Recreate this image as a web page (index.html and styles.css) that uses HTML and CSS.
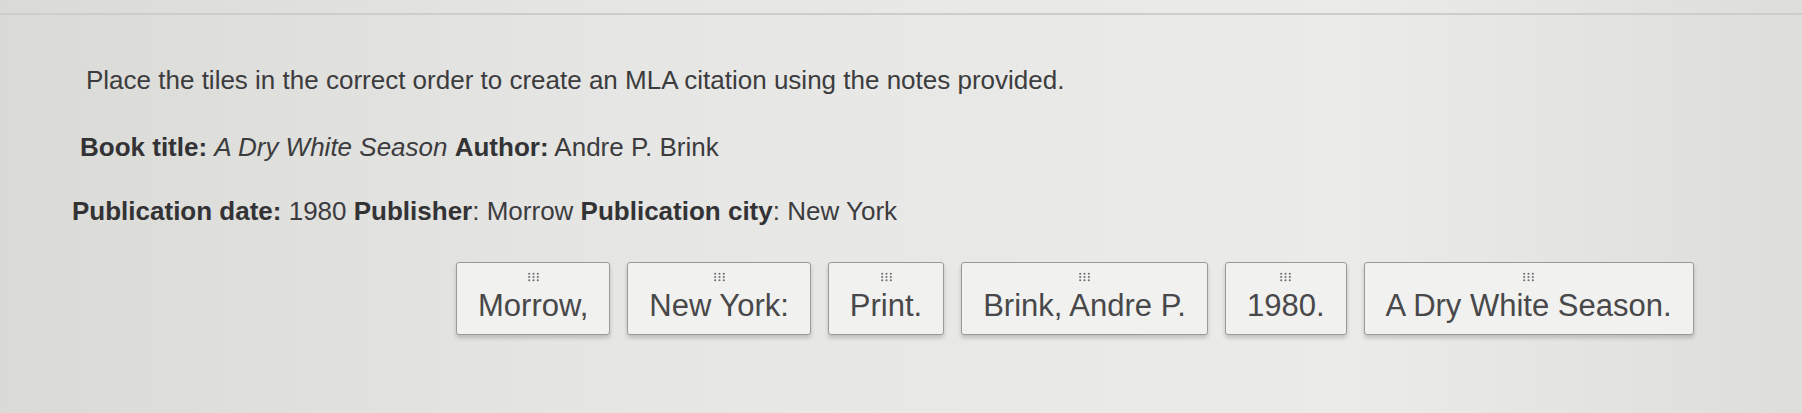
FILE: index.html
```html
<!DOCTYPE html>
<html lang="en">
<head>
  <meta charset="UTF-8" />
  <meta name="viewport" content="width=device-width, initial-scale=1.0"/>
  <title>MLA Citation</title>
  <link rel="stylesheet" href="styles.css">
</head>
<body>

  <div class="page">
    <p class="prompt">Place the tiles in the correct order to create an MLA citation using the notes provided.</p>
    <p class="note first"><b>Book title:</b> <i>A Dry White Season</i> <b>Author:</b> Andre P. Brink</p>
    <p class="note"><b>Publication date:</b> 1980 <b>Publisher</b>: Morrow <b>Publication city</b>: New York</p>

    <div class="tiles" id="tiles">
      <div class="tile" draggable="true">
        <svg class="grip" viewBox="0 0 12 9"><g><circle cx="2" cy="1.5" r="1"/><circle cx="6" cy="1.5" r="1"/><circle cx="10" cy="1.5" r="1"/><circle cx="2" cy="4.5" r="1"/><circle cx="6" cy="4.5" r="1"/><circle cx="10" cy="4.5" r="1"/><circle cx="2" cy="7.5" r="1"/><circle cx="6" cy="7.5" r="1"/><circle cx="10" cy="7.5" r="1"/></g></svg>
        Morrow,
      </div>
      <div class="tile" draggable="true">
        <svg class="grip" viewBox="0 0 12 9"><g><circle cx="2" cy="1.5" r="1"/><circle cx="6" cy="1.5" r="1"/><circle cx="10" cy="1.5" r="1"/><circle cx="2" cy="4.5" r="1"/><circle cx="6" cy="4.5" r="1"/><circle cx="10" cy="4.5" r="1"/><circle cx="2" cy="7.5" r="1"/><circle cx="6" cy="7.5" r="1"/><circle cx="10" cy="7.5" r="1"/></g></svg>
        New York:
      </div>
      <div class="tile" draggable="true">
        <svg class="grip" viewBox="0 0 12 9"><g><circle cx="2" cy="1.5" r="1"/><circle cx="6" cy="1.5" r="1"/><circle cx="10" cy="1.5" r="1"/><circle cx="2" cy="4.5" r="1"/><circle cx="6" cy="4.5" r="1"/><circle cx="10" cy="4.5" r="1"/><circle cx="2" cy="7.5" r="1"/><circle cx="6" cy="7.5" r="1"/><circle cx="10" cy="7.5" r="1"/></g></svg>
        Print.
      </div>
      <div class="tile" draggable="true">
        <svg class="grip" viewBox="0 0 12 9"><g><circle cx="2" cy="1.5" r="1"/><circle cx="6" cy="1.5" r="1"/><circle cx="10" cy="1.5" r="1"/><circle cx="2" cy="4.5" r="1"/><circle cx="6" cy="4.5" r="1"/><circle cx="10" cy="4.5" r="1"/><circle cx="2" cy="7.5" r="1"/><circle cx="6" cy="7.5" r="1"/><circle cx="10" cy="7.5" r="1"/></g></svg>
        Brink, Andre P.
      </div>
      <div class="tile" draggable="true">
        <svg class="grip" viewBox="0 0 12 9"><g><circle cx="2" cy="1.5" r="1"/><circle cx="6" cy="1.5" r="1"/><circle cx="10" cy="1.5" r="1"/><circle cx="2" cy="4.5" r="1"/><circle cx="6" cy="4.5" r="1"/><circle cx="10" cy="4.5" r="1"/><circle cx="2" cy="7.5" r="1"/><circle cx="6" cy="7.5" r="1"/><circle cx="10" cy="7.5" r="1"/></g></svg>
        1980.
      </div>
      <div class="tile" draggable="true">
        <svg class="grip" viewBox="0 0 12 9"><g><circle cx="2" cy="1.5" r="1"/><circle cx="6" cy="1.5" r="1"/><circle cx="10" cy="1.5" r="1"/><circle cx="2" cy="4.5" r="1"/><circle cx="6" cy="4.5" r="1"/><circle cx="10" cy="4.5" r="1"/><circle cx="2" cy="7.5" r="1"/><circle cx="6" cy="7.5" r="1"/><circle cx="10" cy="7.5" r="1"/></g></svg>
        A Dry White Season.
      </div>
    </div>
  </div>

  <script>
    // simple drag to reorder
    const list = document.getElementById('tiles');
    let dragged = null;

    list.addEventListener('dragstart', e => {
      dragged = e.target.closest('.tile');
    });

    list.addEventListener('dragover', e => {
      e.preventDefault();
      const over = e.target.closest('.tile');
      if (!over || over === dragged) return;
      const box = over.getBoundingClientRect();
      const after = e.clientX > box.left + box.width / 2;
      list.insertBefore(dragged, after ? over.nextSibling : over);
    });
  </script>
</body>
</html>
```

FILE: styles.css
```css
* {
  box-sizing: border-box;
}

body {
  margin: 0;
  height: 100vh;
  background: linear-gradient(to right, #dadad7, #e6e6e4 35%, #ebebe9 75%, #dddddA);
  color: #3c3c3e;
  font-family: 'Liberation Sans', Arial, sans-serif;
}

.page {
  border-top: 2px solid #cdcdcb;
  margin-top: 13px;
  padding: 50px 0 0 72px;
}

.prompt {
  margin: 0 0 37px 14px;
  font-size: 26px;
  line-height: 30px;
}

.note {
  margin: 0 0 34px;
  font-size: 26px;
  line-height: 30px;
}

.note.first {
  margin-left: 8px;
}

.note b {
  color: #333335;
}

.tiles {
  display: flex;
  align-items: flex-start;
  gap: 17px;
  margin: 36px 0 0 384px;
}

.tile {
  display: flex;
  flex-direction: column;
  align-items: center;
  padding: 9px 21px 10px;
  background: #f1f1ef;
  border: 1.5px solid #9a9a9a;
  border-radius: 3px;
  box-shadow: 0 3px 4px rgba(0, 0, 0, 0.18);
  font-size: 31px;
  line-height: 36px;
  color: #48484a;
  cursor: grab;
  user-select: none;
}

.grip {
  width: 13px;
  height: 10px;
  margin-bottom: 6px;
  fill: #707072;
}
```
